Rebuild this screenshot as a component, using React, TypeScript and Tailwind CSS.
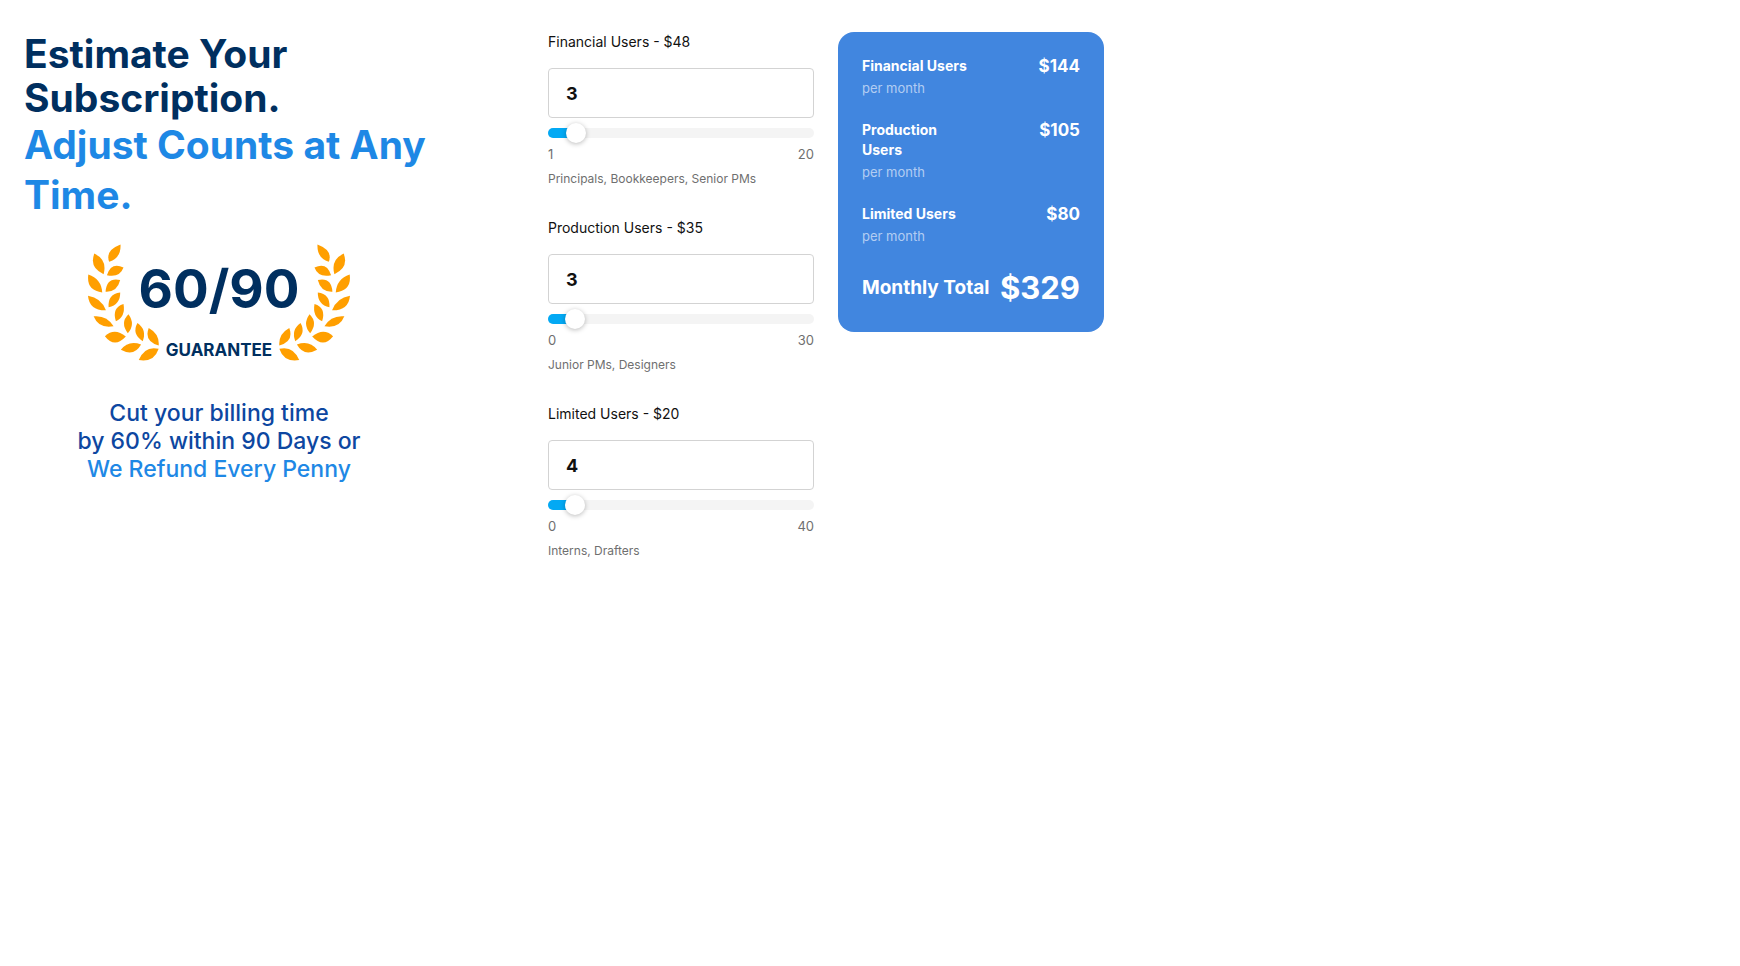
import { useState } from "react";

type Tier = {
  id: string;
  name: string;
  price: number;
  min: number;
  max: number;
  roles: string;
};

const TIERS: readonly Tier[] = [
  { id: "financial", name: "Financial Users", price: 48, min: 1, max: 20, roles: "Principals, Bookkeepers, Senior PMs" },
  { id: "production", name: "Production Users", price: 35, min: 0, max: 30, roles: "Junior PMs, Designers" },
  { id: "limited", name: "Limited Users", price: 20, min: 0, max: 40, roles: "Interns, Drafters" },
];

const LEAVES: readonly string[] = [
  "M152 42 Q105 60 118 94 Q154 82 152 42Z",
  "M73 69 Q57 112 101 131 Q113 88 73 69Z",
  "M161 111 Q124 93 111 134 Q150 142 161 111Z",
  "M55 132 Q48 179 97 186 Q94 145 55 132Z",
  "M151 149 Q110 140 107 184 Q142 186 151 149Z",
  "M54 196 Q58 241 108 240 Q94 202 54 196Z",
  "M151 186 Q113 190 116 231 Q152 222 151 186Z",
  "M71 258 Q86 296 131 288 Q111 254 71 258Z",
  "M161 221 Q125 232 138 273 Q168 259 161 221Z",
  "M105 318 Q134 291 168 319 Q134 356 105 318Z",
  "M176 252 Q150 277 174 309 Q198 283 176 252Z",
  "M153 359 Q176 329 214 343 Q193 381 153 359Z",
  "M203 278 Q185 311 219 333 Q232 298 203 278Z",
  "M207 390 Q225 346 267 356 Q253 398 207 390Z",
  "M237 293 Q222 333 267 346 Q270 311 237 293Z",
];

function Laurel({ className }: { className?: string }) {
  return (
    <svg viewBox="54 41 214 354" className={className} fill="#ff9f00" aria-hidden="true">
      {LEAVES.map((d) => (
        <path key={d} d={d} />
      ))}
    </svg>
  );
}

function Guarantee() {
  return (
    <div className="flex w-[390px] max-w-full flex-col items-center pt-6">
      <div className="flex items-start justify-center">
        <Laurel className="h-[118px] w-[71px]" />
        <div className="flex w-[120px] flex-col items-center pt-4 font-bold text-[#002f5f]">
          <span className="text-[53px] leading-[58px] whitespace-nowrap">60/90</span>
          <span className="pt-[22px] text-[17px] leading-5">GUARANTEE</span>
        </div>
        <Laurel className="h-[118px] w-[71px] -scale-x-100" />
      </div>
      <p className="pt-[37px] text-center text-[23px] leading-7 font-medium text-[#0d47a1]">
        Cut your billing time
        <br />
        by 60% within 90 Days or
        <br />
        <span className="text-[#1e88e5]">We Refund Every Penny</span>
      </p>
    </div>
  );
}

function TierField({
  tier,
  count,
  onChange,
}: {
  tier: Tier;
  count: number;
  onChange: (count: number) => void;
}) {
  const percent = ((count - tier.min) / (tier.max - tier.min)) * 100;

  return (
    <div className="flex flex-col">
      <label htmlFor={tier.id} className="text-[14px] leading-5 text-[#111111]">
        {tier.name} - ${tier.price}
      </label>
      <input
        id={tier.id}
        type="text"
        inputMode="numeric"
        value={count}
        onChange={(e) => onChange(Math.min(tier.max, Math.max(tier.min, Number(e.target.value) || 0)))}
        className="mt-4 h-[50px] w-full rounded border border-[#d3d3d3] bg-white px-[17px] text-[18px] font-bold text-[#111111] outline-none"
      />
      <div className="relative mt-2.5 h-2.5 rounded-full bg-[#f4f4f4]">
        <div className="h-full rounded-full bg-[#03a9f4]" style={{ width: `${percent}%` }} />
        {/* Runs half a thumb past both ends so the thumb centre sits on the value */}
        <input
          type="range"
          aria-label={tier.name}
          min={tier.min}
          max={tier.max}
          value={count}
          onChange={(e) => onChange(Number(e.target.value))}
          className="absolute -inset-x-2.5 -top-[5px] h-5 cursor-pointer appearance-none bg-transparent outline-none [&::-webkit-slider-thumb]:size-5 [&::-webkit-slider-thumb]:appearance-none [&::-webkit-slider-thumb]:rounded-full [&::-webkit-slider-thumb]:bg-white [&::-webkit-slider-thumb]:shadow-[0_1px_5px_rgba(0,0,0,0.28)]"
        />
      </div>
      <div className="mt-1.5 flex justify-between text-[13px] leading-5 text-[#6f6f6f]">
        <span>{tier.min}</span>
        <span>{tier.max}</span>
      </div>
      <p className="mt-[5px] text-[12px] leading-5 text-[#6f6f6f]">{tier.roles}</p>
    </div>
  );
}

export default function App() {
  const [counts, setCounts] = useState<Record<string, number>>({ financial: 3, production: 3, limited: 4 });

  const total = TIERS.reduce((sum, tier) => sum + tier.price * counts[tier.id], 0);

  return (
    <main className="grid max-w-[1128px] grid-cols-[minmax(0,500fr)_minmax(0,266fr)_minmax(0,266fr)] items-start gap-6 px-6 py-8 font-['Inter','Liberation_Sans',sans-serif]">
      <section>
        <h1 className="max-w-[420px] text-[39px] leading-[44px] font-bold text-[#002f5f]">
          Estimate Your Subscription.
        </h1>
        <p className="max-w-[420px] text-[39px] leading-[50px] font-bold text-[#1e88e5]">
          Adjust Counts at Any Time.
        </p>
        <Guarantee />
      </section>

      <section className="flex flex-col gap-[29px]">
        {TIERS.map((tier) => (
          <TierField
            key={tier.id}
            tier={tier}
            count={counts[tier.id]}
            onChange={(count) => setCounts({ ...counts, [tier.id]: count })}
          />
        ))}
      </section>

      <aside className="flex flex-col gap-6 rounded-2xl bg-[#4186df] p-6 text-white">
        {TIERS.map((tier) => (
          <div key={tier.id} className="grid grid-cols-2">
            <div>
              <h2 className="text-[14px] leading-5 font-bold">{tier.name}</h2>
              <p className="pt-1 text-[13px] leading-4 text-white/60">per month</p>
            </div>
            <span className="text-right text-[17px] leading-5 font-bold">${tier.price * counts[tier.id]}</span>
          </div>
        ))}
        <div className="flex items-center justify-between whitespace-nowrap">
          <h2 className="text-[19px] leading-6 font-bold">Monthly Total</h2>
          <span className="text-[31px] leading-10 font-bold">${total}</span>
        </div>
      </aside>
    </main>
  );
}
